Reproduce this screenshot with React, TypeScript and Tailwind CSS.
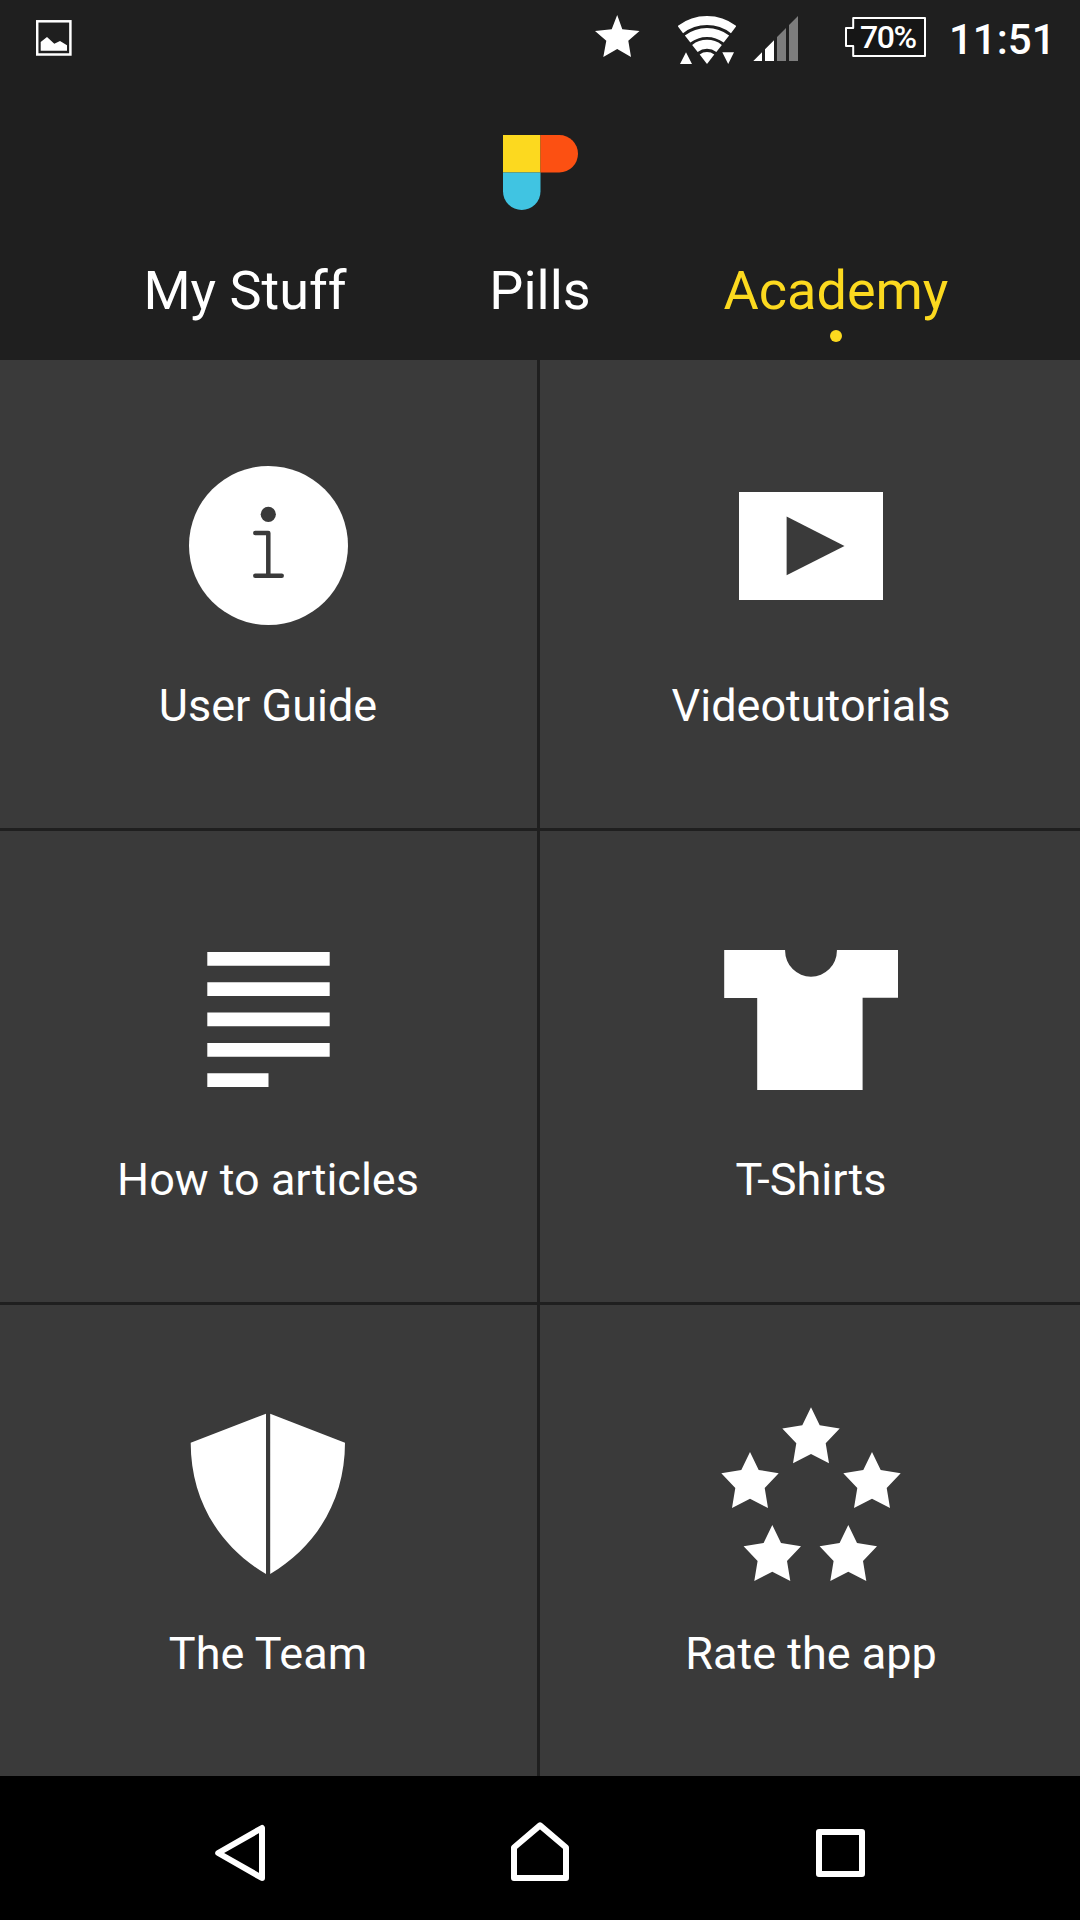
import React from "react";

const STAR = "l8.7 18 20 3.3-14 14.7 3.3 20-18-9.3-18 9.3 3.3-20-14-14.7 20-3.3z";

function StatusBar() {
  return (
    <div className="flex h-[75px] items-start pl-9 text-white">
      <svg className="mt-5 h-9 w-9 shrink-0" viewBox="0 0 36 36">
        <rect x="1.2" y="1.3" width="33.2" height="33.2" fill="none" stroke="currentColor" strokeWidth="2.5" />
        <path d="M4.7 22 11 17l7.3 6.7L24 21l7 4.3v5.4H4.7z" fill="currentColor" />
      </svg>
      <svg className="mt-[15px] ml-[523px] h-[43px] w-[45px] shrink-0" viewBox="0 0 45 43" fill="currentColor">
        <path d="M22.2 0 27.3 14.3 44.5 16 33.3 25.7 36 42 22.2 34 8.3 42 11.3 25.7 0 16l16.7-1.7z" />
      </svg>
      <svg className="mt-[15px] ml-[38px] h-[50px] w-[58px] shrink-0" viewBox="0 0 58 50" fill="currentColor">
        <g fill="none" stroke="currentColor" strokeWidth="9">
          <path d="M2.3 14.6A43.8 43.8 0 0 1 55.7 14.6" />
          <path d="M9.6 24A31.8 31.8 0 0 1 48.4 24" />
          <path d="M16.9 33.5A19.8 19.8 0 0 1 41.1 33.5" />
        </g>
        <path d="M29 49 21.7 39.5A12 12 0 0 1 36.3 39.5z" />
        <path d="M2 49 8 37.3 14 49zM44.3 37.3H56L50.2 49z" />
      </svg>
      <svg className="mt-4 ml-[17px] h-[45px] w-[45px] shrink-0" viewBox="0 0 45 45" fill="currentColor">
        <path d="M.3 45 9 36.3V45zM12 45V33.3l9-9V45z" />
        <path d="M24 45V21l9-9v33zM36 45V9l9-9v45z" fill="#7d7d7d" />
      </svg>
      <div className="relative mt-[17px] ml-[47px] h-10 w-[81px] shrink-0">
        <svg className="h-10 w-[81px]" viewBox="0 0 81 40">
          <path d="M8.2 1H80v38H8.2V29H1V11h7.2z" fill="#161616" stroke="currentColor" strokeWidth="2" strokeLinejoin="round" />
        </svg>
        <span className="absolute top-0 left-[15px] text-[32px] leading-[40px] font-medium tracking-[-1.4px]">70%</span>
      </div>
      <span className="mt-[15px] ml-[23px] text-[42px] leading-[50px] font-medium">11:51</span>
    </div>
  );
}

function Logo() {
  return (
    <svg className="h-[75px] w-[75px]" viewBox="0 0 75 75">
      <path d="M0 0h37.5v37.5H0z" fill="#fcd91f" />
      <path d="M37.5 0h18.75a18.75 18.75 0 0 1 0 37.5H37.5z" fill="#fc5012" />
      <path d="M0 37.5h37.5v18.75a18.75 18.75 0 0 1-37.5 0z" fill="#40c4e2" />
    </svg>
  );
}

const tabs = [
  { name: "My Stuff", active: false },
  { name: "Pills", active: false },
  { name: "Academy", active: true },
];

function Header() {
  return (
    <header className="flex h-[285px] flex-col pt-[60px]">
      <div className="pl-[503px]">
        <Logo />
      </div>
      <nav className="mt-[49px] grid grid-cols-[294px_296px_296px] pl-[98px]">
        {tabs.map((t) => (
          <div key={t.name} className={t.active ? "flex flex-col items-center text-[#fcd91f]" : "flex flex-col items-center text-white"}>
            <span className="text-[54px] leading-[64px] whitespace-nowrap">{t.name}</span>
            {t.active && <span className="mt-[7px] h-3 w-3 rounded-full bg-[#fcd91f]" />}
          </div>
        ))}
      </nav>
    </header>
  );
}

const BG = "#3a3a3a";

const guide = (
  <>
    <circle cx="90" cy="89.5" r="79.5" />
    <circle cx="89.8" cy="58.3" r="7.6" fill={BG} />
    <path d="M76.8 77h13v42.7M76.8 119.7h26.4" fill="none" stroke={BG} strokeWidth="4.5" strokeLinecap="round" strokeLinejoin="round" />
  </>
);
const video = (
  <>
    <path d="M18 36h144v108H18z" />
    <path d="M65.6 60.5 123.5 90 65.6 119.2z" fill={BG} />
  </>
);
const articles = (
  <path d="M28.8 22h122.4v13.7H28.8zM28.8 52.3h122.4V66H28.8zM28.8 82.6h122.4v13.7H28.8zM28.8 113h122.4v13.7H28.8zM28.8 143.3H90V157H28.8z" />
);
const shirt = (
  <path d="M3.2 20H64.1v.8a25.9 25.9 0 0 0 51.8 0V20H177v47.7h-35.4V160H36.2V68h-33z" />
);
const shield = (
  <path d="M12.2 38.7 87.5 9.7V170C40 142 12.2 95 12.2 38.7zM91.7 9.7l74.8 29C166.5 95 138.7 142 91.7 170z" />
);
const stars = (
  <path d={`M90 3.3${STAR}M29 48${STAR}M151 48${STAR}M51.3 121${STAR}M127.3 121${STAR}`} />
);

const LEFT = "-0.5 0 180 180";
const RIGHT = "0 0 180 180";

const tiles = [
  { label: "User Guide", icon: guide, box: LEFT },
  { label: "Videotutorials", icon: video, box: RIGHT },
  { label: "How to articles", icon: articles, box: LEFT },
  { label: "T-Shirts", icon: shirt, box: RIGHT },
  { label: "The Team", icon: shield, box: LEFT },
  { label: "Rate the app", icon: stars, box: RIGHT },
];

export default function App() {
  return (
    <div className="flex h-[1920px] w-[1080px] flex-col overflow-hidden bg-[#1f1f1f] font-['Roboto',sans-serif]">
      <StatusBar />
      <Header />
      <main className="grid grid-cols-[537px_1fr] grid-rows-[468px_471px_471px] gap-[3px]">
        {tiles.map((t) => (
          <div key={t.label} className="flex flex-col items-center justify-end bg-[#3a3a3a] pb-[95px] odd:pr-px even:pl-0.5">
            <svg className="h-[180px] w-[180px]" viewBox={t.box} fill="#fff">
              {t.icon}
            </svg>
            <span className="mt-[43px] text-[45px] leading-[54px] whitespace-nowrap text-white">{t.label}</span>
          </div>
        ))}
      </main>
      <footer className="flex h-36 items-start justify-between bg-black px-[210px] pt-[46px]">
        <svg className="h-[60px] w-[60px]" viewBox="0 0 60 60" fill="none" stroke="#fff" strokeWidth="6" strokeLinejoin="round">
          <path d="M8.2 31 52 6v50z" />
        </svg>
        <svg className="h-[60px] w-[60px]" viewBox="0 0 60 60" fill="none" stroke="#fff" strokeWidth="6" strokeLinejoin="round">
          <path d="M30 3.4 56 25.5V56H4V25.5z" />
        </svg>
        <svg className="h-[60px] w-[60px]" viewBox="0 0 60 60" fill="none" stroke="#fff" strokeWidth="6" strokeLinejoin="round">
          <path d="M9 10h43v42H9z" />
        </svg>
      </footer>
    </div>
  );
}
